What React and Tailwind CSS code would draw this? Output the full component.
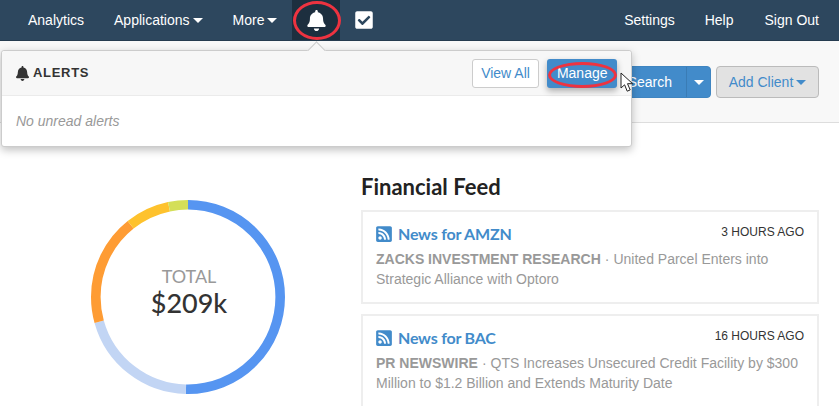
import { FaBell, FaCheckSquare, FaRssSquare } from "react-icons/fa";

const Caret = ({ className }) => (
  <span className={`inline-block w-0 h-0 border-x-[5px] border-x-transparent border-t-[5px] ${className}`}></span>
);

const segments = [
  { from: 0, to: 181, color: "#5695f1" },
  { from: 181, to: 254, color: "#c2d5f4" },
  { from: 254, to: 321, color: "#fe9c34" },
  { from: 321, to: 347.5, color: "#fec22d" },
  { from: 347.5, to: 360, color: "#d4df58" },
];

function Donut() {
  const r = 92.2;
  const c = 2 * Math.PI * r;
  return (
    <div className="relative w-[194px] h-[194px]">
      <svg width="194" height="194" viewBox="0 0 194 194" className="-rotate-90">
        {segments.map((s) => (
          <circle
            key={s.from}
            cx="97"
            cy="97"
            r={r}
            fill="none"
            stroke={s.color}
            strokeWidth="9.6"
            strokeDasharray={`${((s.to - s.from) / 360) * c} ${c}`}
            strokeDashoffset={(-s.from / 360) * c}
          />
        ))}
      </svg>
      <div className="absolute inset-0 flex flex-col items-center justify-center font-['Lato',sans-serif] pl-[2px] pb-[11px]">
        <div className="text-[18px] leading-[22px] text-[#999]">TOTAL</div>
        <div className="text-[27px] leading-[32px] font-medium text-[#333]">$209k</div>
      </div>
    </div>
  );
}

function FeedCard({ title, time, source, first, second }) {
  return (
    <div className="border-2 border-[#eee] h-[94px] px-[13px] pt-[10px] mb-[10px] shrink-0">
      <div className="flex justify-between">
        <div className="flex items-center gap-[6px] h-[24px]">
          <FaRssSquare className="text-[#428bca] w-[16px] h-[18px]" />
          <span className="font-['Lato',sans-serif] font-bold text-[16px] tracking-[-0.2px] text-[#428bca]">{title}</span>
        </div>
        <div className="text-[12px] leading-[20px] text-[#333]">{time}</div>
      </div>
      <div className="text-[14px] leading-[20px] text-[#999] mt-[3px]">
        <div className="flex gap-[4px]">
          <span className="font-bold">{source}</span>
          <span>·</span>
          <span>{first}</span>
        </div>
        <div>{second}</div>
      </div>
    </div>
  );
}

export default function App() {
  return (
    <div className="relative w-[839px] h-[406px] overflow-hidden bg-white font-['Liberation_Sans',sans-serif] text-[14px]">
      {/* top nav */}
      <nav className="flex items-stretch justify-between h-[41px] bg-[#2d475e] text-white border-b border-[#253b4f] pr-[5px] pl-[13px]">
        <div className="flex items-stretch">
          <a className="flex items-center px-[15px]">Analytics</a>
          <a className="flex items-center gap-[3px] px-[15px]">Applications<Caret className="border-t-white" /></a>
          <a className="flex items-center gap-[3px] px-[15px]">More<Caret className="border-t-white" /></a>
          <a className="flex items-center justify-center w-[48px] bg-[#1d2f3f]">
            <FaBell className="text-[21px]" />
          </a>
          <a className="flex items-center px-[14px]">
            <FaCheckSquare className="text-[20px]" />
          </a>
        </div>
        <div className="flex items-stretch">
          <a className="flex items-center px-[15px]">Settings</a>
          <a className="flex items-center px-[15px]">Help</a>
          <a className="flex items-center pl-[16px] pr-[15px]">Sign Out</a>
        </div>
      </nav>

      {/* search bar */}
      <div className="flex items-start justify-end h-[82px] bg-[#f8f8f8] border-b border-[#ddd] pt-[25px] pr-[20px]">
        <div className="flex h-[32px] bg-[#428bca] text-white rounded-[4px] border border-[#3f85c1]">
          <span className="flex items-center pl-[12px] pr-[14px]">Search</span>
          <span className="flex items-center justify-center w-[24px] border-l border-[#3a7cb5]">
            <Caret className="border-t-white" />
          </span>
        </div>
        <div className="flex items-center justify-center gap-[3px] w-[103px] h-[32px] ml-[5px] bg-[#e2e2e2] text-[#428bca] rounded-[4px] border border-[#bbb]">
          Add Client<Caret className="border-t-[#428bca]" />
        </div>
      </div>

      {/* content */}
      <div className="flex">
        <div className="w-[361px] shrink-0 pl-[91px] pt-[77px]">
          <Donut />
        </div>
        <div className="w-[458px] flex flex-col pt-[49px]">
          <h2 className="font-['Lato',sans-serif] font-bold text-[22px] leading-[30px] text-[#222] mb-[8px]">Financial Feed</h2>
          <FeedCard
            title="News for AMZN"
            time="3 HOURS AGO"
            source="ZACKS INVESTMENT RESEARCH"
            first="United Parcel Enters into"
            second="Strategic Alliance with Optoro"
          />
          <FeedCard
            title="News for BAC"
            time="16 HOURS AGO"
            source="PR NEWSWIRE"
            first="QTS Increases Unsecured Credit Facility by $300"
            second="Million to $1.2 Billion and Extends Maturity Date"
          />
        </div>
      </div>

      {/* alerts popover */}
      <div className="absolute left-[1px] top-[50px] w-[631px] h-[97px] bg-white border border-[#ccc] rounded-[3px] shadow-[0_3px_8px_rgba(0,0,0,0.25)]">
        <div className="absolute left-[308px] -top-[7px] w-[13px] h-[13px] rotate-45 bg-[#f7f7f7] border-l border-t border-[#ccc]"></div>
        <div className="relative flex items-center justify-between h-[45px] bg-[#f7f7f7] border-b border-[#ebebeb] rounded-t-[3px] pl-[14px] pr-[14px]">
          <div className="flex items-center gap-[4px] text-[13px] font-bold text-[#333] tracking-[0.7px]">
            <FaBell className="w-[13px] h-[15px]" />
            ALERTS
          </div>
          <div className="flex items-center gap-[8px]">
            <span className="flex items-center h-[29px] px-[8.5px] bg-white border border-[#ccc] rounded-[3px] text-[#428bca]">View All</span>
            <span className="flex items-center h-[29px] px-[9.5px] bg-[#428bca] rounded-[3px] text-white shadow-[0_3px_6px_rgba(0,0,0,0.3)]">Manage</span>
          </div>
        </div>
        <div className="px-[14px] pt-[15px] italic text-[#999]">No unread alerts</div>
      </div>

      {/* red annotations */}
      <div className="absolute left-[293px] top-[1px] w-[48px] h-[39px] rounded-[50%] border-[3px] border-[#ee3340]"></div>
      <div className="absolute left-[548px] top-[62px] w-[69px] h-[26px] rounded-[50%] border-[3px] border-[#ee3340]"></div>

      {/* mouse cursor */}
      <svg className="absolute left-[620px] top-[72px]" width="14" height="21" viewBox="0 0 14 21">
        <path d="M1 1v15l3.6-3.2 2.6 6.4 3-1.3-2.7-6.2H12.6z" fill="#fff" stroke="#222" strokeWidth="1" strokeLinejoin="round" />
      </svg>
    </div>
  );
}
